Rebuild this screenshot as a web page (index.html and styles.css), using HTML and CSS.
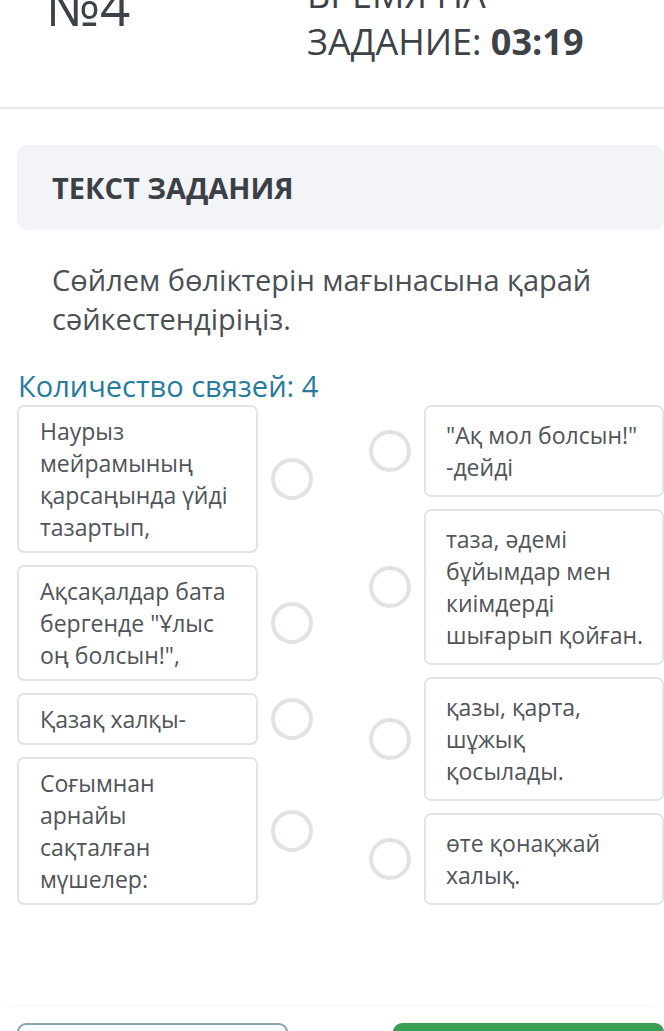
FILE: index.html
```html
<!DOCTYPE html>
<html lang="ru">
<head>
<meta charset="utf-8">
<link rel="stylesheet" href="styles.css">
</head>
<body>
<header class="top">
  <div class="num">№4</div>
  <div class="timer">ВРЕМЯ НА<br>ЗАДАНИЕ: <b>03:19</b></div>
</header>
<div class="divider"></div>
<main class="content">
  <div class="task-head">ТЕКСТ ЗАДАНИЯ</div>
  <p class="question">Сөйлем бөліктерін мағынасына қарай сәйкестендіріңіз.</p>
  <div class="count">Количество связей: 4</div>
  <div class="match">
    <div class="col left">
      <div class="row"><div class="card">Наурыз мейрамының қарсаңында үйді тазартып,</div><span class="dot"></span></div>
      <div class="row"><div class="card">Ақсақалдар бата бергенде "Ұлыс оң болсын!",</div><span class="dot"></span></div>
      <div class="row"><div class="card">Қазақ халқы-</div><span class="dot"></span></div>
      <div class="row"><div class="card">Соғымнан арнайы сақталған мүшелер:</div><span class="dot"></span></div>
    </div>
    <div class="col right">
      <div class="row"><span class="dot"></span><div class="card">"Ақ мол болсын!" -дейді</div></div>
      <div class="row"><span class="dot"></span><div class="card">таза, әдемі бұйымдар мен киімдерді шығарып қойған.</div></div>
      <div class="row"><span class="dot"></span><div class="card">қазы, қарта, шұжық қосылады.</div></div>
      <div class="row"><span class="dot"></span><div class="card">өте қонақжай халық.</div></div>
    </div>
  </div>
</main>
<footer class="bottom">
  <button class="btn btn-outline"></button>
  <button class="btn btn-green"></button>
</footer>
</body>
</html>
```
FILE: styles.css
```css
* { box-sizing: border-box; }
html, body { margin: 0; padding: 0; background: #fff; }
body {
  font-family: "Open Sans", "Noto Sans", sans-serif;
  color: #4b4f56;
  width: 664px;
  overflow: hidden;
}
.top {
  display: flex;
  align-items: flex-start;
  margin-top: -29px;
  height: 136px;
  color: #3d4148;
}
.num {
  font-size: 53px;
  line-height: 60px;
  padding-top: 5px;
  padding-left: 46px;
  width: 307px;
  flex: none;
}
.timer {
  font-size: 36px;
  line-height: 47px;
}
.timer b { font-weight: 700; }
.divider {
  height: 2px;
  background: #e8e8e8;
}
.content {
  padding-left: 17px;
  padding-top: 36px;
}
.task-head {
  background: #f2f4f7;
  border-radius: 10px;
  height: 85px;
  display: flex;
  align-items: center;
  padding-left: 35px;
  font-weight: 700;
  font-size: 29px;
  color: #3b3f46;
}
.question {
  margin: 30px 0 0 0;
  padding-left: 35px;
  padding-right: 30px;
  font-size: 29px;
  line-height: 39px;
  color: #4b4f56;
}
.count {
  margin-top: 28px;
  padding-left: 1px;
  font-size: 29px;
  line-height: 39px;
  color: #277c9b;
}
.match {
  display: grid;
  grid-template-columns: 296px 295px;
  column-gap: 56px;
  align-items: start;
}
.col {
  display: flex;
  flex-direction: column;
  gap: 12px;
}
.row {
  display: flex;
  align-items: center;
  gap: 13px;
}
.card {
  border: 2px solid #e3e4e6;
  border-radius: 7px;
  font-size: 23px;
  line-height: 32px;
  color: #505459;
}
.left .card {
  width: 241px;
  padding: 8px 20px 8px 21px;
}
.right .card {
  width: 240px;
  padding: 12px 18px 12px 20px;
}
.dot {
  flex: none;
  width: 42px;
  height: 42px;
  border-radius: 50%;
  border: 4px solid #e0e2e5;
}
.bottom {
  margin-top: 102px;
  display: flex;
  justify-content: space-between;
  padding: 16px 0 0 17px;
  box-shadow: 0 -6px 8px -6px rgba(0,0,0,0.05);
}
.btn {
  width: 271px;
  height: 52px;
  border-radius: 9px;
  padding: 0;
}
.btn-outline {
  background: #f4fbfc;
  border: 2px solid #8da4ab;
}
.btn-green {
  background: #3a9f55;
  border: none;
}
```
